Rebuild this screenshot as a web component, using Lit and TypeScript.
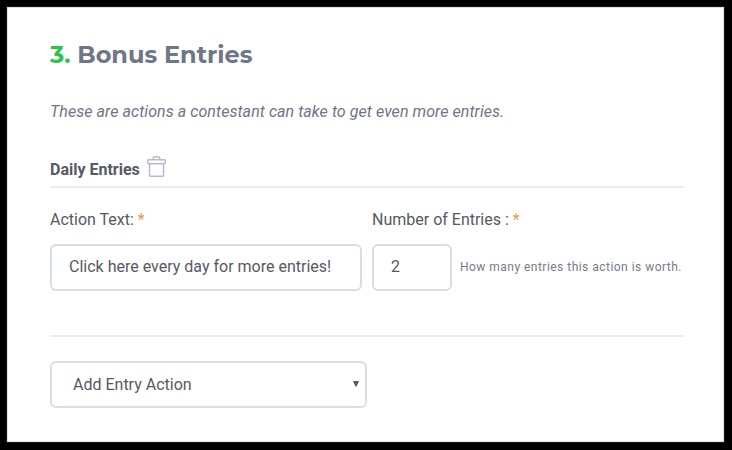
import { LitElement, html, css } from "lit";
import { customElement } from "lit/decorators.js";

@customElement("app-root")
class AppRoot extends LitElement {
  static styles = css`
    * { box-sizing: border-box; }
    :host { display: block; width: 732px; height: 450px; background: #000; padding: 7px 8px 8px 7px; overflow: hidden; box-sizing: border-box; font-family: Roboto, sans-serif; font-size: 16px; color: #555a64; }
    .card { height: 435px; background: #fff; padding: 30px 40px 0 43px; box-shadow: inset 0 0 0 1px #dedede, 0 0 0 1px #1c1a1c; }
    h1 { margin: 0; font: 700 24px/36px Montserrat, "Open Sans", sans-serif; color: #6e7687; white-space: nowrap; }
    .num { color: #2fc14c; }
    .intro { margin: 27px 0 0; height: 24px; line-height: 24px; font-style: italic; letter-spacing: .06px; color: #6e7687; white-space: nowrap; }
    .head { display: flex; margin-top: 31px; height: 33px; border-bottom: 2px solid #e8edf4; line-height: 24px; padding-top: 3px; font-weight: 700; }
    .trash { width: 19px; height: 22px; margin: -2px 0 0 7px; }
    .fields { display: grid; grid-template-columns: 312px 80px 1fr; column-gap: 10px; height: 149px; align-content: start; border-bottom: 2px solid #e8edf4; }
    .fields label { line-height: 24px; margin-top: 20px; height: 36px; white-space: nowrap; }
    .wide { grid-column: span 2; }
    .req { color: #f5934b; }
    .box { height: 47px; border: 2px solid #d6dfe7; border-radius: 6px; line-height: 41px; padding-left: 17px; white-space: nowrap; }
    .hint { font-size: 12px; letter-spacing: .475px; line-height: 46px; color: #757c8b; margin-left: -2px; white-space: nowrap; }
    .select { width: 317px; margin-top: 24px; padding: 0 6px 0 21px; line-height: 43px; display: flex; justify-content: space-between; align-items: center; }
    .arrow { width: 6px; height: 6px; display: block; margin-bottom: 1px; }
  `;
  render() {
    return html`<section class="card">
      <h1><span class="num">3.</span> Bonus Entries</h1>
      <p class="intro">These are actions a contestant can take to get even more entries.</p>
      <div class="head"><span>Daily Entries</span>
        <svg class="trash" viewBox="0 0 19 22" fill="none" stroke="#b4bccb" stroke-width="1.4" stroke-linejoin="round"><rect x=".8" y="3.7" width="17.4" height="4" rx=".7"/><path d="M6.3 3.7V2q0-1.3 1.3-1.3h3.8q1.3 0 1.3 1.3v1.7M2.5 7.7v11.6q0 .9.9.9h12.2q.9 0 .9-.9V7.7"/></svg>
      </div>
      <div class="fields">
        <label>Action Text: <span class="req">*</span></label>
        <label class="wide">Number of Entries : <span class="req">*</span></label>
        <div class="box">Click here every day for more entries!</div>
        <div class="box">2</div>
        <span class="hint">How many entries this action is worth.</span>
      </div>
      <div class="box select"><span>Add Entry Action</span><svg class="arrow" viewBox="0 0 6 6"><path d="M0 0h6L3.6 5.5H2.4z" fill="#555a64"/></svg></div>
    </section>`;
  }
}
